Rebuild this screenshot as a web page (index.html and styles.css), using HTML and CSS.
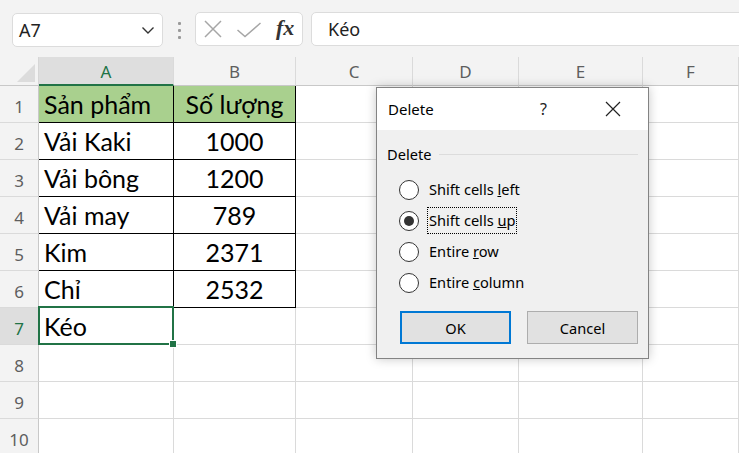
FILE: index.html
```html
<!DOCTYPE html>
<html lang="vi">
<head>
<meta charset="utf-8">
<title>Delete</title>
<link rel="stylesheet" href="styles.css">
</head>
<body>
<div class="app">
  <div class="toolbar">
    <div class="namebox">
      <span class="ref">A7</span>
      <svg class="chev" width="14" height="9" viewBox="0 0 14 9"><path d="M1.5 1.5 L7 7 L12.5 1.5" fill="none" stroke="#333" stroke-width="1.4"/></svg>
    </div>
    <div class="grip"><i></i><i></i><i></i></div>
    <div class="fxbox">
      <svg class="ico" width="20" height="18" viewBox="0 0 20 18"><path d="M2 1 L18 17 M18 1 L2 17" stroke="#a6a6a6" stroke-width="1.5" fill="none"/></svg>
      <svg class="ico" width="26" height="16" viewBox="0 0 26 16"><path d="M1.5 8 L9 14.5 L24.5 1" stroke="#a6a6a6" stroke-width="1.5" fill="none"/></svg>
      <span class="fx">fx</span>
    </div>
    <div class="formula">Kéo</div>
  </div>

  <div class="sheet">
    <div class="grid">
      <div class="corner"><span class="tri"></span></div>
      <div class="ch sel">A</div>
      <div class="ch">B</div>
      <div class="ch">C</div>
      <div class="ch">D</div>
      <div class="ch">E</div>
      <div class="ch">F</div>

      <div class="rh">1</div>
      <div class="c t hd">Sản phẩm</div>
      <div class="c t hd ctr">Số lượng</div>
      <div class="c"></div><div class="c"></div><div class="c"></div><div class="c"></div>

      <div class="rh">2</div>
      <div class="c t">Vải Kaki</div>
      <div class="c t ctr">1000</div>
      <div class="c"></div><div class="c"></div><div class="c"></div><div class="c"></div>

      <div class="rh">3</div>
      <div class="c t">Vải bông</div>
      <div class="c t ctr">1200</div>
      <div class="c"></div><div class="c"></div><div class="c"></div><div class="c"></div>

      <div class="rh">4</div>
      <div class="c t">Vải may</div>
      <div class="c t ctr">789</div>
      <div class="c"></div><div class="c"></div><div class="c"></div><div class="c"></div>

      <div class="rh">5</div>
      <div class="c t">Kim</div>
      <div class="c t ctr">2371</div>
      <div class="c"></div><div class="c"></div><div class="c"></div><div class="c"></div>

      <div class="rh">6</div>
      <div class="c t">Chỉ</div>
      <div class="c t ctr">2532</div>
      <div class="c"></div><div class="c"></div><div class="c"></div><div class="c"></div>

      <div class="rh sel">7</div>
      <div class="c active">Kéo</div>
      <div class="c"></div><div class="c"></div><div class="c"></div><div class="c"></div><div class="c"></div>

      <div class="rh">8</div>
      <div class="c"></div><div class="c"></div><div class="c"></div><div class="c"></div><div class="c"></div><div class="c"></div>

      <div class="rh">9</div>
      <div class="c"></div><div class="c"></div><div class="c"></div><div class="c"></div><div class="c"></div><div class="c"></div>

      <div class="rh">10</div>
      <div class="c"></div><div class="c"></div><div class="c"></div><div class="c"></div><div class="c"></div><div class="c"></div>
    </div>

    <div class="dialog">
      <div class="titlebar">
        <span class="dtitle">Delete</span>
        <span class="help">?</span>
        <svg class="close" width="16" height="16" viewBox="0 0 16 16"><path d="M1 1 L15 15 M15 1 L1 15" stroke="#222" stroke-width="1.2" fill="none"/></svg>
      </div>
      <div class="dbody">
        <div class="group"><span>Delete</span><span class="rule"></span></div>
        <div class="options">
          <div class="opt"><span class="radio"></span><span class="lbl">Shift cells <u>l</u>eft</span></div>
          <div class="opt"><span class="radio on"></span><span class="lbl focus">Shift cells <u>u</u>p</span></div>
          <div class="opt"><span class="radio"></span><span class="lbl">Entire <u>r</u>ow</span></div>
          <div class="opt"><span class="radio"></span><span class="lbl">Entire <u>c</u>olumn</span></div>
        </div>
        <div class="buttons">
          <div class="btn primary">OK</div>
          <div class="btn">Cancel</div>
        </div>
      </div>
    </div>
  </div>
</div>
</body>
</html>
```

FILE: styles.css
```css
html, body {
  margin: 0;
  padding: 0;
  background: #f3f3f3;
}
.app {
  width: 739px;
  height: 453px;
  overflow: hidden;
  font-family: "Noto Sans", "Open Sans", sans-serif;
}

/* toolbar */
.toolbar {
  height: 57px;
  box-sizing: border-box;
  padding: 12px 0 0 12px;
  display: flex;
  align-items: flex-start;
  background: #f3f3f3;
}
.namebox {
  width: 151px;
  height: 34px;
  box-sizing: border-box;
  margin-top: 1px;
  background: #fff;
  border: 1px solid #dcdcdc;
  border-radius: 5px;
  display: flex;
  align-items: center;
  justify-content: space-between;
  padding: 0 7px 0 6px;
  font-size: 18px;
  color: #222;
}
.chev { margin-top: 1px; }
.grip {
  width: 32px;
  display: flex;
  flex-direction: column;
  align-items: center;
  gap: 4px;
  padding-top: 10px;
}
.grip i {
  display: block;
  width: 3px;
  height: 3px;
  background: #9a9a9a;
  border-radius: 1px;
}
.fxbox {
  width: 108px;
  height: 34px;
  box-sizing: border-box;
  background: #fff;
  border: 1px solid #dcdcdc;
  border-radius: 5px;
  display: flex;
  align-items: center;
  padding: 0 0 0 7px;
}
.fxbox .ico:first-child { margin-right: 13px; }
.fxbox .ico:nth-child(2) { margin-right: 14px; margin-top: 2px; }
.fx {
  font-family: "Liberation Serif", "DejaVu Serif", serif;
  font-style: italic;
  font-weight: bold;
  font-size: 22px;
  color: #333;
  margin-top: -2px;
}
.formula {
  flex: 1;
  height: 34px;
  box-sizing: border-box;
  margin-left: 8px;
  margin-right: -10px;
  background: #fff;
  border: 1px solid #dcdcdc;
  border-radius: 5px;
  display: flex;
  align-items: center;
  padding-left: 16px;
  font-size: 18px;
  color: #222;
}

/* sheet */
.sheet {
  position: relative;
  background: #fff;
}
.grid {
  display: grid;
  grid-template-columns: 39px 135px 122px 117px 106px 124px 96px;
  grid-template-rows: 29px repeat(10, 37px);
}
.grid > div {
  box-sizing: border-box;
}
.corner {
  background: #f3f3f3;
  border-right: 1px solid #d6d6d6;
  border-bottom: 1px solid #c8c8c8;
  position: relative;
}
.tri {
  position: absolute;
  right: 3px;
  bottom: 3px;
  width: 0;
  height: 0;
  border-left: 18px solid transparent;
  border-bottom: 18px solid #dcdcdc;
}
.ch {
  background: #f3f3f3;
  border-right: 1px solid #dadada;
  border-bottom: 1px solid #c8c8c8;
  display: flex;
  align-items: center;
  justify-content: center;
  font-size: 17px;
  color: #5e5e5e;
  padding-top: 1px;
}
.ch.sel {
  background: #dedede;
  color: #217346;
  border-bottom: 2px solid #217346;
}
.rh {
  background: #f3f3f3;
  border-right: 1px solid #c8c8c8;
  border-bottom: 1px solid #dadada;
  display: flex;
  align-items: center;
  justify-content: center;
  font-size: 17px;
  color: #5e5e5e;
  padding-top: 4px;
}
.rh.sel {
  background: #dedede;
  color: #217346;
}
.c {
  border-right: 1px solid #dadada;
  border-bottom: 1px solid #dadada;
  display: flex;
  align-items: flex-end;
  padding: 0 0 3px 5px;
  font-family: "Lato", "Open Sans", sans-serif;
  font-size: 25px;
  color: #000;
  white-space: nowrap;
}
.c.t {
  border-right-color: #000;
  border-bottom-color: #000;
}
.c.hd { background: #a9d08e; }
.c.ctr { justify-content: center; padding-left: 0; }
.c.active { position: relative; }
.c.active::after {
  content: "";
  position: absolute;
  left: -1px;
  top: -2px;
  right: -1px;
  bottom: -1px;
  border: 2px solid #217346;
}
.c.active::before {
  content: "";
  position: absolute;
  right: -4px;
  bottom: -4px;
  width: 6px;
  height: 6px;
  background: #217346;
  border: 1px solid #fff;
  z-index: 2;
}

/* dialog */
.dialog {
  position: absolute;
  left: 376px;
  top: 30px;
  width: 273px;
  height: 272px;
  box-sizing: border-box;
  background: #f0f0f0;
  border: 1px solid #838383;
  box-shadow: 0 0 10px rgba(0,0,0,0.22);
  font-family: "Noto Sans", "Open Sans", sans-serif;
  font-size: 14.6px;
  color: #000;
  z-index: 5;
}
.titlebar {
  height: 42px;
  background: #fff;
  display: flex;
  align-items: center;
  padding-left: 11px;
}
.dtitle { font-size: 15px; flex: 1; }
.help { font-size: 16px; margin-right: 58px; color: #222; }
.close { margin-right: 27px; }
.dbody {
  padding: 13px 10px 0 10px;
}
.group {
  display: flex;
  align-items: center;
  height: 22px;
}
.rule {
  flex: 1;
  height: 1px;
  background: #dcdcdc;
  margin-left: 8px;
}
.options {
  margin-top: 9px;
  padding-left: 12px;
}
.opt {
  height: 31px;
  display: flex;
  align-items: center;
}
.radio {
  width: 20px;
  height: 20px;
  box-sizing: border-box;
  border: 1px solid #333;
  border-radius: 50%;
  background: #fff;
  margin-right: 8px;
  display: flex;
  align-items: center;
  justify-content: center;
}
.radio.on::after {
  content: "";
  width: 10px;
  height: 10px;
  border-radius: 50%;
  background: #333;
}
.lbl {
  padding: 2px 1px 3px 1px;
  border: 1px dotted transparent;
}
.lbl.focus { border-color: #000; }
.buttons {
  margin-top: 13px;
  padding-left: 13px;
  display: flex;
  gap: 16px;
}
.btn {
  width: 111px;
  height: 33px;
  box-sizing: border-box;
  background: #e1e1e1;
  border: 1px solid #adadad;
  display: flex;
  align-items: center;
  justify-content: center;
  font-size: 14.6px;
}
.btn.primary {
  border: 2px solid #0078d4;
}
```
